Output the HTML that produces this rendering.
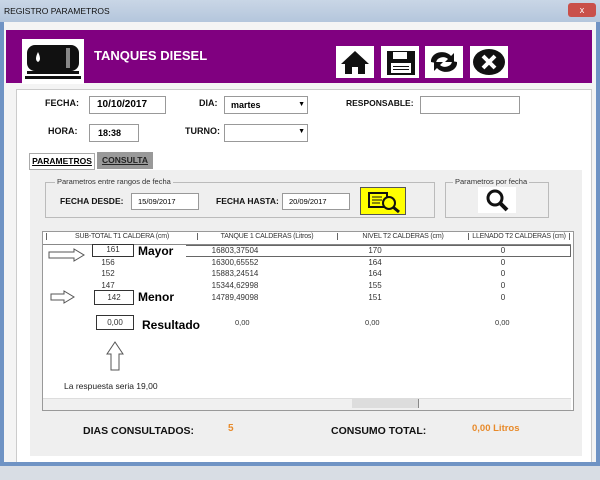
<!DOCTYPE html><html><head><style>
body{margin:0;width:600px;height:480px;overflow:hidden;background:#dfe6ee;font-family:"Liberation Sans",sans-serif;position:relative}
.a{position:absolute}
.b{font-weight:bold;font-size:9px;color:#111}
.in{background:#fff;border:1px solid #999;font-size:10px}
.sm{font-size:7.5px;color:#333}
</style></head><body>
<div class="a" style="left:0;top:0;width:600px;height:22px;background:linear-gradient(#c9d6e6,#b4c6dc)"></div>
<div class="a" style="left:4px;top:6px;font-size:8.5px;color:#111">REGISTRO PARAMETROS</div>
<div class="a" style="left:568px;top:3px;width:28px;height:14px;background:#c9504a;border-radius:3px;color:#fff;font-size:9px;text-align:center;line-height:14px">x</div>
<div class="a" style="left:0;top:22px;width:4px;height:440px;background:#6f93c4"></div>
<div class="a" style="left:596px;top:22px;width:4px;height:440px;background:#6f93c4"></div>
<div class="a" style="left:4px;top:22px;width:592px;height:440px;background:#f4f4f4"></div>
<div class="a" style="left:6px;top:30px;width:586px;height:53px;background:#800080"></div>
<div class="a" style="left:22px;top:39px;width:62px;height:45px;background:#fff"></div>
<svg class="a" style="left:24px;top:40px" width="58" height="42"><rect x="3" y="5" width="52" height="26" rx="8" fill="#111"/><rect x="3" y="31" width="52" height="3" fill="#111"/><rect x="1" y="36" width="56" height="3" fill="#111"/><rect x="42" y="8" width="4" height="20" fill="#888"/><path d="M14 12 q-4 8 0 10 q4-2 0-10z" fill="#fff"/></svg>
<div class="a" style="left:94px;top:48px;color:#fff;font-weight:bold;font-size:13px">TANQUES DIESEL</div>
<div class="a" style="left:336px;top:46px;width:38px;height:32px;background:#fff"></div>
<div class="a" style="left:381px;top:46px;width:38px;height:32px;background:#fff"></div>
<div class="a" style="left:425px;top:46px;width:38px;height:32px;background:#fff"></div>
<div class="a" style="left:470px;top:46px;width:38px;height:32px;background:#fff"></div>
<svg class="a" style="left:336px;top:46px" width="175" height="32">
<path d="M5 18 L19 5 L33 18 L29 18 L29 28 L22 28 L22 21 L16 21 L16 28 L9 28 L9 18Z" fill="#111"/>
<rect x="51" y="5" width="28" height="24" fill="#111"/><rect x="57" y="6" width="14" height="7" fill="#fff"/><rect x="55" y="17" width="20" height="10" fill="#fff"/><rect x="57" y="20" width="16" height="1" fill="#111"/><rect x="57" y="23" width="16" height="1" fill="#111"/>
<path d="M95 16 a11 9 0 0 1 20-6 l3-3 v9 h-9 l3-3 a7 6 0 0 0-12 4z M121 16 a11 9 0 0 1-20 6 l-3 3 v-9 h9 l-3 3 a7 6 0 0 0 12-4z" fill="#111"/>
<ellipse cx="153" cy="16" rx="16" ry="13" fill="#111"/><path d="M147 10 l12 12 M159 10 l-12 12" stroke="#fff" stroke-width="4"/>
</svg>
<div class="a" style="left:16px;top:89px;width:574px;height:372px;background:#fff;border:1px solid #ccc"></div>
<div class="a b" style="left:45px;top:98px">FECHA:</div>
<div class="a in" style="left:89px;top:96px;width:68px;height:16px;line-height:16px;padding-left:7px;font-weight:bold;font-size:10px">10/10/2017</div>
<div class="a b" style="left:199px;top:98px">DIA:</div>
<div class="a in" style="left:224px;top:96px;width:76px;height:16px;line-height:16px;padding-left:6px;font-weight:bold;font-size:9px">martes<span style="position:absolute;right:2px;font-size:7px">▼</span></div>
<div class="a b" style="left:346px;top:98px;font-size:8.5px">RESPONSABLE:</div>
<div class="a in" style="left:420px;top:96px;width:98px;height:16px"></div>
<div class="a b" style="left:48px;top:126px">HORA:</div>
<div class="a in" style="left:89px;top:124px;width:40px;height:16px;line-height:16px;padding-left:8px;font-weight:bold;font-size:9px">18:38</div>
<div class="a b" style="left:185px;top:126px">TURNO:</div>
<div class="a in" style="left:224px;top:124px;width:82px;height:16px"><span style="position:absolute;right:2px;top:3px;font-size:7px">▼</span></div>
<div class="a" style="left:29px;top:153px;width:64px;height:15px;border:1px solid #aaa;background:#fff;font-size:8.5px;font-weight:bold;text-decoration:underline;line-height:15px;text-align:center">PARAMETROS</div>
<div class="a" style="left:97px;top:152px;width:56px;height:17px;background:#999;font-size:8.5px;font-weight:bold;text-decoration:underline;line-height:17px;text-align:center;color:#222">CONSULTA</div>
<div class="a" style="left:30px;top:170px;width:552px;height:286px;background:#efefef"></div>
<div class="a" style="left:45px;top:182px;width:388px;height:34px;border:1px solid #bbb"></div>
<div class="a sm" style="left:55px;top:177px;background:#efefef;padding:0 2px">Parametros entre rangos de fecha</div>
<div class="a b" style="left:60px;top:196px;font-size:8.5px">FECHA DESDE:</div>
<div class="a in" style="left:131px;top:193px;width:60px;height:15px;line-height:15px;font-size:7.5px;padding-left:6px">15/09/2017</div>
<div class="a b" style="left:216px;top:196px;font-size:8.5px">FECHA HASTA:</div>
<div class="a in" style="left:282px;top:193px;width:60px;height:15px;line-height:15px;font-size:7.5px;padding-left:6px">20/09/2017</div>
<div class="a" style="left:360px;top:187px;width:44px;height:26px;background:#ffff00;border:1px solid #555"></div>
<svg class="a" style="left:360px;top:187px" width="46" height="28"><rect x="9" y="6" width="18" height="14" fill="none" stroke="#111" stroke-width="2"/><path d="M12 10h10M12 13h10M12 16h8" stroke="#111"/><circle cx="29" cy="16" r="6" fill="#ff0" stroke="#111" stroke-width="2"/><path d="M33 20l6 5" stroke="#111" stroke-width="3"/></svg>
<div class="a" style="left:445px;top:182px;width:102px;height:34px;border:1px solid #bbb"></div>
<div class="a sm" style="left:453px;top:177px;background:#efefef;padding:0 2px">Parametros por fecha</div>
<div class="a" style="left:478px;top:187px;width:38px;height:26px;background:#fff"></div>
<svg class="a" style="left:478px;top:187px" width="38" height="26"><circle cx="17" cy="11" r="7" fill="none" stroke="#111" stroke-width="3"/><path d="M22 16l7 7" stroke="#111" stroke-width="4"/></svg>
<div class="a" style="left:42px;top:231px;width:530px;height:178px;background:#fff;border:1px solid #999"></div>
<div class="a" style="left:43px;top:232px;width:528px;height:12px;border-bottom:1px solid #888;font-size:7px;color:#333;white-space:nowrap;letter-spacing:-0.2px">
<span class="a" style="left:3px;width:150px;border-left:1px solid #666;border-right:1px solid #666;text-align:center;top:1px">SUB-TOTAL T1 CALDERA (cm)</span>
<span class="a" style="left:154px;width:140px;border-right:1px solid #666;text-align:center;top:1px">TANQUE 1 CALDERAS (Litros)</span>
<span class="a" style="left:295px;width:130px;border-right:1px solid #666;text-align:center;top:1px">NIVEL T2 CALDERAS (cm)</span>
<span class="a" style="left:426px;width:100px;border-right:1px solid #666;text-align:center;top:1px">LLENADO T2 CALDERAS (cm)</span></div>
<div class="a" style="left:186px;top:245px;width:384px;height:10px;border:1px solid #666;border-left:none"></div>
<div class="a" style="left:85px;top:245px;font-size:8px;color:#333;line-height:11.7px;width:480px">
<div class="a" style="left:0;width:46px;text-align:center">161<br>156<br>152<br>147</div>
<div class="a" style="left:100px;width:100px;text-align:center">16803,37504<br>16300,65552<br>15883,24514<br>15344,62998<br>14789,49098</div>
<div class="a" style="left:240px;width:100px;text-align:center">170<br>164<br>164<br>155<br>151</div>
<div class="a" style="left:368px;width:100px;text-align:center">0<br>0<br>0<br>0<br>0</div></div>
<div class="a" style="left:92px;top:244px;width:40px;height:11px;border:1px solid #333;background:#fff;font-size:8px;text-align:center;color:#333">161</div>
<div class="a" style="left:138px;top:244px;font-weight:bold;font-size:12px">Mayor</div>
<div class="a" style="left:94px;top:290px;width:38px;height:13px;border:1px solid #333;background:#fff;font-size:8px;text-align:center;line-height:13px;color:#333">142</div>
<div class="a" style="left:138px;top:290px;font-weight:bold;font-size:12px">Menor</div>
<div class="a" style="left:96px;top:315px;width:36px;height:13px;border:1px solid #333;background:#fff;font-size:8px;text-align:center;line-height:13px;color:#333">0,00</div>
<div class="a" style="left:142px;top:318px;font-weight:bold;font-size:12px">Resultado</div>
<div class="a sm" style="left:235px;top:318px">0,00</div>
<div class="a sm" style="left:365px;top:318px">0,00</div>
<div class="a sm" style="left:495px;top:318px">0,00</div>
<svg class="a" style="left:48px;top:248px" width="90" height="130"><path d="M1 4h25v-3l10 6-10 6v-3h-25z" fill="#fff" stroke="#555"/><path d="M3 46h13v-3l10 6-10 6v-3h-13z" fill="#fff" stroke="#555"/><path d="M67 94l8 12h-4v16h-8v-16h-4z" fill="#fff" stroke="#555"/></svg>
<div class="a" style="left:64px;top:381px;font-size:8.5px;color:#222">La respuesta seria 19,00</div>
<div class="a" style="left:43px;top:398px;width:528px;height:11px;background:#f0f0f0;border-top:1px solid #ddd"></div>
<div class="a" style="left:352px;top:399px;width:66px;height:9px;background:#ddd;border-right:1px solid #888"></div>
<div class="a b" style="left:83px;top:425px;font-size:10.5px">DIAS CONSULTADOS:</div>
<div class="a" style="left:228px;top:423px;font-size:10px;font-weight:bold;color:#e88a2a">5</div>
<div class="a b" style="left:331px;top:425px;font-size:10.5px">CONSUMO TOTAL:</div>
<div class="a" style="left:472px;top:423px;font-size:9.5px;font-weight:bold;color:#e88a2a">0,00 Litros</div>
<div class="a" style="left:0;top:462px;width:600px;height:4px;background:#6f93c4"></div>
<div class="a" style="left:0;top:466px;width:600px;height:14px;background:#d8dde4"></div>
</body></html>
